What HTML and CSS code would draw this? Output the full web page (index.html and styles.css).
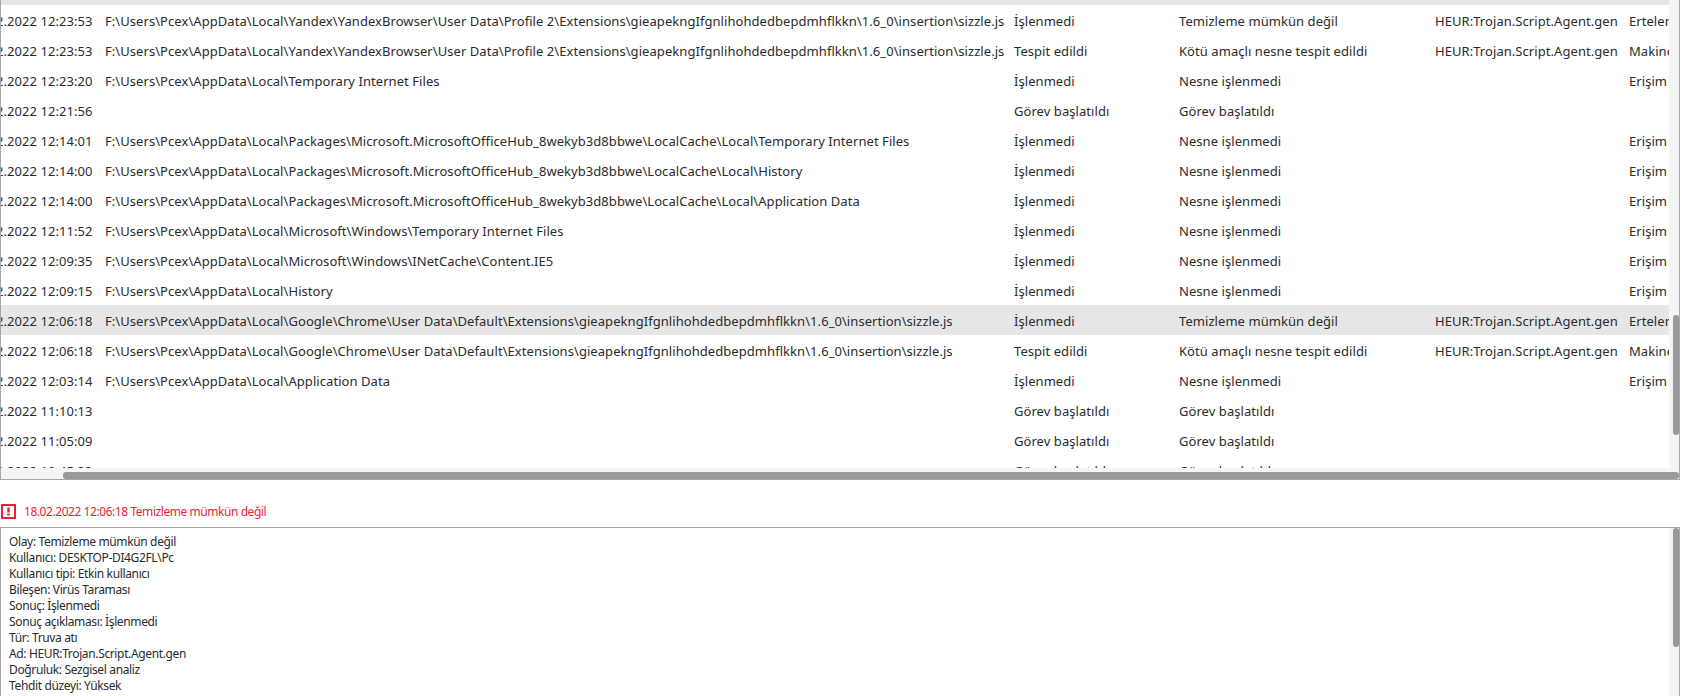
FILE: index.html
```html
<!DOCTYPE html>
<html lang="tr">
<head>
<meta charset="utf-8">
<title>Raporlar</title>
<link rel="stylesheet" href="styles.css">
</head>
<body>
<section class="list">
  <div class="rows">
    <div class="row selected"><span></span><span></span><span></span><span></span><span></span><span></span></div>
    <div class="row"><span>18.02.2022 12:23:53</span><span>F:\Users\Pcex\AppData\Local\Yandex\YandexBrowser\User Data\Profile 2\Extensions\gieapekngIfgnlihohdedbepdmhflkkn\1.6_0\insertion\sizzle.js</span><span>İşlenmedi</span><span>Temizleme mümkün değil</span><span>HEUR:Trojan.Script.Agent.gen</span><span>Ertelenen</span></div>
    <div class="row"><span>18.02.2022 12:23:53</span><span>F:\Users\Pcex\AppData\Local\Yandex\YandexBrowser\User Data\Profile 2\Extensions\gieapekngIfgnlihohdedbepdmhflkkn\1.6_0\insertion\sizzle.js</span><span>Tespit edildi</span><span>Kötü amaçlı nesne tespit edildi</span><span>HEUR:Trojan.Script.Agent.gen</span><span>Makine öğrenimi</span></div>
    <div class="row"><span>18.02.2022 12:23:20</span><span>F:\Users\Pcex\AppData\Local\Temporary Internet Files</span><span>İşlenmedi</span><span>Nesne işlenmedi</span><span></span><span>Erişim reddedildi</span></div>
    <div class="row"><span>18.02.2022 12:21:56</span><span></span><span>Görev başlatıldı</span><span>Görev başlatıldı</span><span></span><span></span></div>
    <div class="row"><span>18.02.2022 12:14:01</span><span>F:\Users\Pcex\AppData\Local\Packages\Microsoft.MicrosoftOfficeHub_8wekyb3d8bbwe\LocalCache\Local\Temporary Internet Files</span><span>İşlenmedi</span><span>Nesne işlenmedi</span><span></span><span>Erişim reddedildi</span></div>
    <div class="row"><span>18.02.2022 12:14:00</span><span>F:\Users\Pcex\AppData\Local\Packages\Microsoft.MicrosoftOfficeHub_8wekyb3d8bbwe\LocalCache\Local\History</span><span>İşlenmedi</span><span>Nesne işlenmedi</span><span></span><span>Erişim reddedildi</span></div>
    <div class="row"><span>18.02.2022 12:14:00</span><span>F:\Users\Pcex\AppData\Local\Packages\Microsoft.MicrosoftOfficeHub_8wekyb3d8bbwe\LocalCache\Local\Application Data</span><span>İşlenmedi</span><span>Nesne işlenmedi</span><span></span><span>Erişim reddedildi</span></div>
    <div class="row"><span>18.02.2022 12:11:52</span><span>F:\Users\Pcex\AppData\Local\Microsoft\Windows\Temporary Internet Files</span><span>İşlenmedi</span><span>Nesne işlenmedi</span><span></span><span>Erişim reddedildi</span></div>
    <div class="row"><span>18.02.2022 12:09:35</span><span>F:\Users\Pcex\AppData\Local\Microsoft\Windows\INetCache\Content.IE5</span><span>İşlenmedi</span><span>Nesne işlenmedi</span><span></span><span>Erişim reddedildi</span></div>
    <div class="row"><span>18.02.2022 12:09:15</span><span>F:\Users\Pcex\AppData\Local\History</span><span>İşlenmedi</span><span>Nesne işlenmedi</span><span></span><span>Erişim reddedildi</span></div>
    <div class="row selected"><span>18.02.2022 12:06:18</span><span>F:\Users\Pcex\AppData\Local\Google\Chrome\User Data\Default\Extensions\gieapekngIfgnlihohdedbepdmhflkkn\1.6_0\insertion\sizzle.js</span><span>İşlenmedi</span><span>Temizleme mümkün değil</span><span>HEUR:Trojan.Script.Agent.gen</span><span>Ertelenen</span></div>
    <div class="row"><span>18.02.2022 12:06:18</span><span>F:\Users\Pcex\AppData\Local\Google\Chrome\User Data\Default\Extensions\gieapekngIfgnlihohdedbepdmhflkkn\1.6_0\insertion\sizzle.js</span><span>Tespit edildi</span><span>Kötü amaçlı nesne tespit edildi</span><span>HEUR:Trojan.Script.Agent.gen</span><span>Makine öğrenimi</span></div>
    <div class="row"><span>18.02.2022 12:03:14</span><span>F:\Users\Pcex\AppData\Local\Application Data</span><span>İşlenmedi</span><span>Nesne işlenmedi</span><span></span><span>Erişim reddedildi</span></div>
    <div class="row"><span>18.02.2022 11:10:13</span><span></span><span>Görev başlatıldı</span><span>Görev başlatıldı</span><span></span><span></span></div>
    <div class="row"><span>18.02.2022 11:05:09</span><span></span><span>Görev başlatıldı</span><span>Görev başlatıldı</span><span></span><span></span></div>
    <div class="row"><span>18.02.2022 10:45:33</span><span></span><span>Görev başlatıldı</span><span>Görev başlatıldı</span><span></span><span></span></div>
  </div>
  <div class="vtrack"><div class="vthumb list-thumb"></div></div>
  <div class="htrack"><div class="hthumb"></div></div>
</section>
<div class="status">
  <svg class="alert" viewBox="0 0 15 15" width="15" height="15" aria-hidden="true"><rect x="1" y="1" width="13" height="13" fill="#fff" stroke="#e81e3c" stroke-width="2"/><rect x="6.25" y="3.5" width="2.5" height="5" fill="#e81e3c"/><rect x="6.25" y="9.5" width="2.5" height="2" fill="#e81e3c"/></svg>
  <span>18.02.2022 12:06:18 Temizleme mümkün değil</span>
</div>
<section class="detail">
  <p>Olay: Temizleme mümkün değil</p>
  <p>Kullanıcı: DESKTOP-DI4G2FL\Pc</p>
  <p>Kullanıcı tipi: Etkin kullanıcı</p>
  <p>Bileşen: Virüs Taraması</p>
  <p>Sonuç: İşlenmedi</p>
  <p>Sonuç açıklaması: İşlenmedi</p>
  <p>Tür: Truva atı</p>
  <p>Ad: HEUR:Trojan.Script.Agent.gen</p>
  <p>Doğruluk: Sezgisel analiz</p>
  <p>Tehdit düzeyi: Yüksek</p>
  <div class="vtrack detail-track"><div class="vthumb detail-thumb"></div></div>
</section>
</body>
</html>
```
FILE: styles.css
```css
html, body {
  margin: 0;
  height: 696px;
  overflow: hidden;
  background: #fff;
}
body {
  display: flex;
  flex-direction: column;
  width: 1680px;
  font-family: "Noto Sans", sans-serif;
  color: #2b2b2b;
}
.list {
  position: relative;
  height: 480px;
  flex: none;
  box-sizing: border-box;
  border: 1px solid #a6a6a6;
  border-top: 0;
  overflow: hidden;
}
.rows {
  margin: -25px 10px 0 -61px;
  width: 1729px;
  height: 493px;
  overflow: hidden;
}
.row {
  display: grid;
  grid-template-columns: 164px 909px 165px 256px 194px 41px;
  height: 30px;
  align-items: center;
  font-size: 13px;
  letter-spacing: 0.06px;
  white-space: nowrap;
}
.row span {
  overflow: hidden;
  padding: 1px 0 0 1px;
  line-height: 18px;
}
.row span:first-child {
  padding-left: 30px;
}
.selected {
  background: #e6e6e6;
}
.vtrack {
  position: absolute;
  top: 0;
  right: 0;
  bottom: 0;
  width: 10px;
  background: #f5f5f5;
}
.vthumb {
  position: absolute;
  right: 0;
  width: 6px;
  background: #999;
  border-radius: 3px;
}
.list-thumb {
  top: 315px;
  height: 120px;
}
.htrack {
  position: absolute;
  left: 0;
  right: 0;
  bottom: 0;
  height: 11px;
  background: #f5f5f5;
}
.hthumb {
  position: absolute;
  left: 62px;
  right: 0;
  bottom: 0;
  height: 7px;
  background: #999;
  border-radius: 3px;
}
.status {
  display: flex;
  align-items: center;
  gap: 8px;
  flex: none;
  height: 15px;
  margin: 24px 0 8px 1px;
  font-size: 12px;
  letter-spacing: -0.44px;
  color: #e81e3c;
}
.alert {
  flex: none;
}
.detail {
  position: relative;
  flex: none;
  height: 169px;
  box-sizing: border-box;
  border: 1px solid #a6a6a6;
  border-bottom: 0;
  padding: 6px 0 0 8px;
  font-size: 12px;
  letter-spacing: -0.36px;
  line-height: 16px;
  overflow: hidden;
}
.detail p {
  margin: 0;
}
.detail-thumb {
  top: 0;
  height: 119px;
}
```
